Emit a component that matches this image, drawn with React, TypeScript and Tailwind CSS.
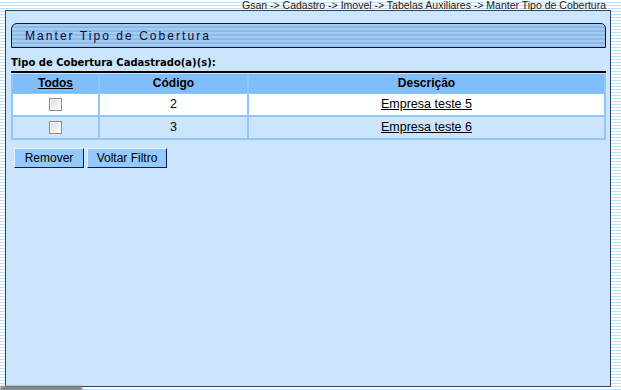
import React from 'react';

const rows = [
  { codigo: '2', descricao: 'Empresa teste 5', bg: 'bg-white' },
  { codigo: '3', descricao: 'Empresa teste 6', bg: 'bg-[#cbe5fd]' },
];

const Checkbox = () => (
  <span className="inline-block w-[13px] h-[13px] border border-[#8e8f8f] bg-[linear-gradient(135deg,#dcdcdc,#ffffff)] shadow-[inset_1px_1px_0_#f4f4f4]" />
);

const Button = ({ label, width }: { label: string; width: string }) => (
  <button
    className={`${width} h-[20px] bg-[#94c9fb] border border-t-[#e6f2ff] border-l-[#e6f2ff] border-r-[#0a1a5c] border-b-[#0a1a5c] text-[12px] text-black leading-none font-['Liberation_Sans',Arial,sans-serif]`}
  >
    {label}
  </button>
);

export default function App() {
  return (
    <div className="relative w-[621px] h-[390px] overflow-hidden bg-[repeating-linear-gradient(180deg,#ffffff_0px,#ffffff_2px,#bde0f7_2px,#bde0f7_3px)] font-['Liberation_Sans',Arial,sans-serif]">
      {/* Breadcrumb */}
      <div className="h-[10px] pr-[15px] text-right text-[10.5px] leading-[10px] text-[#1a1a1a]">
        Gsan -&gt; Cadastro -&gt; Imovel -&gt; Tabelas Auxiliares -&gt; Manter Tipo de Cobertura
      </div>

      {/* Main panel */}
      <div className="ml-[5px] w-[606px] h-[377px] border border-[#2a4566] bg-[#cbe5fd] pl-[5px] pr-[4px] pt-[12px]">
        {/* Title bar */}
        <div className="h-[25px] border border-[#0c1830] rounded-tl-[6px] rounded-tr-[5px] bg-[repeating-linear-gradient(180deg,#a4ccf2_0px,#a4ccf2_2px,#8cbbe9_2px,#8cbbe9_4px)] pl-[13px] flex items-center">
          <span className="text-[12px] tracking-[2.05px] text-[#0b0b3a] pt-[1px]">Manter Tipo de Cobertura</span>
        </div>

        <div className="mt-[7px] h-[15px] text-[10px] leading-[15px] font-bold font-['DejaVu_Sans',Verdana,sans-serif] text-black">
          Tipo de Cobertura Cadastrado(a)(s):
        </div>

        {/* Table */}
        <div className="mt-[1px] border-t-2 border-black">
          <div className="mt-[1px] bg-[#90c6f9] px-[2px] pb-[2px]">
            <div className="grid grid-cols-[85px_147px_355px] gap-x-[2px] h-[19px] text-[12px] font-bold text-black leading-[19px] text-center">
              <div className="bg-[#80bdfc] underline">Todos</div>
              <div className="bg-[#80bdfc]">Código</div>
              <div className="bg-[#80bdfc]">Descrição</div>
            </div>
            {rows.map((r, i) => (
              <div
                key={r.codigo}
                className={`grid grid-cols-[85px_147px_355px] gap-x-[2px] h-[21px] text-[12.5px] text-black text-center ${i === 0 ? 'mt-[1px]' : 'mt-[2px]'}`}
              >
                <div className={`${r.bg} flex items-center justify-center`}>
                  <Checkbox />
                </div>
                <div className={`${r.bg} flex items-center justify-center`}>{r.codigo}</div>
                <div className={`${r.bg} flex items-center justify-center`}>
                  <span className="underline">{r.descricao}</span>
                </div>
              </div>
            ))}
          </div>
        </div>

        <div className="mt-[8px] ml-[3px] flex gap-[3px]">
          <Button label="Remover" width="w-[70px]" />
          <Button label="Voltar Filtro" width="w-[80px]" />
        </div>
      </div>

      {/* bottom-left shadow */}
      <div className="absolute left-0 bottom-0 w-[82px] h-[4px] bg-[linear-gradient(180deg,#9a9a9a,#5a5a5a)] blur-[1px]" />
    </div>
  );
}
